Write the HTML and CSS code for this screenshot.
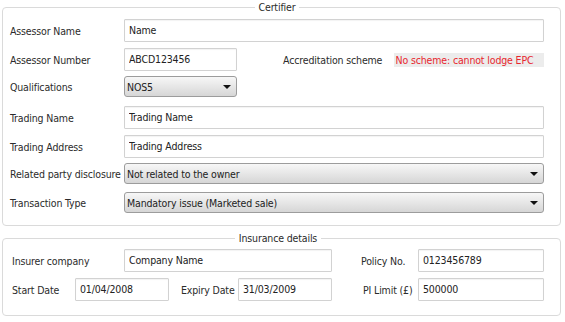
FILE: index.html
```html
<!DOCTYPE html>
<html lang="en">

<head>
    <meta charset="UTF-8">
    <meta name="viewport" content="width=device-width, initial-scale=1.0">
    <title>Certifier Details</title>
    <link rel="stylesheet" href="styles.css">
</head>

<body>
    <form class="epc-form">
        <fieldset class="group certifier">
            <legend>Certifier</legend>
            <div class="row">
                <label for="assessor-name">Assessor Name</label>
                <input type="text" id="assessor-name" class="full" value="Name">
            </div>
            <div class="row">
                <label for="assessor-number">Assessor Number</label>
                <input type="text" id="assessor-number" class="short" value="ABCD123456">
                <span class="scheme-label">Accreditation scheme</span>
                <span class="scheme-status">No scheme: cannot lodge EPC</span>
            </div>
            <div class="row select-row">
                <label for="qualifications">Qualifications</label>
                <span class="select-wrap short">
                    <select id="qualifications">
                        <option>NOS5</option>
                        <option>NOS3</option>
                        <option>NOS4</option>
                    </select>
                </span>
            </div>
            <div class="row">
                <label for="trading-name">Trading Name</label>
                <input type="text" id="trading-name" class="full" value="Trading Name">
            </div>
            <div class="row">
                <label for="trading-address">Trading Address</label>
                <input type="text" id="trading-address" class="full" value="Trading Address">
            </div>
            <div class="row select-row">
                <label for="related-party">Related party disclosure</label>
                <span class="select-wrap full">
                    <select id="related-party">
                        <option>Not related to the owner</option>
                        <option>Relative of the owner</option>
                    </select>
                </span>
            </div>
            <div class="row select-row">
                <label for="transaction-type">Transaction Type</label>
                <span class="select-wrap full">
                    <select id="transaction-type">
                        <option>Mandatory issue (Marketed sale)</option>
                        <option>Mandatory issue (Non-marketed sale)</option>
                    </select>
                </span>
            </div>
        </fieldset>

        <fieldset class="group insurance">
            <legend>Insurance details</legend>
            <div class="row">
                <label for="insurer" class="lbl-insurer">Insurer company</label>
                <input type="text" id="insurer" class="company" value="Company Name">
                <label for="policy-no" class="lbl-policy">Policy No.</label>
                <input type="text" id="policy-no" class="policy" value="0123456789">
            </div>
            <div class="row">
                <label for="start-date" class="lbl-start">Start Date</label>
                <input type="text" id="start-date" class="date" value="01/04/2008">
                <label for="expiry-date" class="lbl-expiry">Expiry Date</label>
                <input type="text" id="expiry-date" class="date" value="31/03/2009">
                <label for="pi-limit" class="lbl-limit">PI Limit (£)</label>
                <input type="text" id="pi-limit" class="policy" value="500000">
            </div>
        </fieldset>
    </form>
</body>

</html>
```

FILE: styles.css
```css
body {
    margin: 0;
    padding: 0;
    background-color: #fff;
    color: #2b2b2b;
    font-family: Tahoma, "DejaVu Sans Condensed", "DejaVu Sans", sans-serif;
    font-size: 10.5px;
    letter-spacing: -0.15px;
}

.group {
    margin: 0 4px 0 2px;
    border: 1px solid #dadada;
    border-radius: 4px;
    min-inline-size: 0;
}

.group legend {
    margin: 0 auto;
    padding: 0 4px;
    line-height: 14px;
}

.certifier {
    padding: 2px 16px 6px 7px;
}

.insurance {
    margin-top: 5px;
    padding: 1px 16px 11px 9px;
}

.row {
    box-sizing: border-box;
    display: flex;
    align-items: center;
    height: 29px;
    white-space: nowrap;
}

.select-row {
    padding-bottom: 4px;
}

.certifier .row label {
    width: 114px;
    flex: none;
}

input[type="text"] {
    box-sizing: border-box;
    height: 23px;
    margin: 0;
    padding: 0 4px 2px;
    border: 1px solid #d2d2d2;
    border-radius: 1px;
    box-shadow: inset 0 1px 1px rgba(0, 0, 0, 0.05);
    background-color: #fff;
    color: #222;
    font: inherit;
    letter-spacing: inherit;
}

.full {
    flex: 1;
}

.short {
    width: 113px;
    flex: none;
}

.scheme-label {
    margin-left: 46px;
    width: 111px;
}

.scheme-status {
    width: 149px;
    height: 14px;
    padding-left: 2px;
    line-height: 14px;
    background-color: #ececec;
    color: #e8262e;
}

/* dropdowns */
.select-wrap {
    position: relative;
    display: block;
    height: 21px;
}

.select-wrap select {
    box-sizing: border-box;
    width: 100%;
    height: 21px;
    margin: 0;
    padding: 0 20px 0 2px;
    border: 1px solid #9c9c9c;
    border-radius: 3px;
    background: linear-gradient(#f7f7f7, #d6d6d6);
    color: #222;
    font: inherit;
    letter-spacing: inherit;
    appearance: none;
    -webkit-appearance: none;
}

.select-wrap::after {
    content: "";
    position: absolute;
    right: 6px;
    top: 9px;
    border-left: 4px solid transparent;
    border-right: 4px solid transparent;
    border-top: 4px solid #111;
    pointer-events: none;
}

/* insurance rows */
.lbl-insurer {
    width: 112px;
}

.company {
    width: 208px;
}

.lbl-policy {
    margin-left: 29px;
    width: 57px;
}

.policy {
    width: 126px;
}

.lbl-start {
    width: 63px;
}

.date {
    width: 94px;
}

.lbl-expiry {
    margin-left: 12px;
    width: 57px;
}

.lbl-limit {
    margin-left: 31px;
    width: 55px;
}
```
